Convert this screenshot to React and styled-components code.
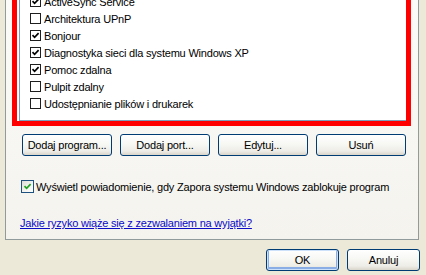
import React from "react";
import styled, { createGlobalStyle } from "styled-components";

const Global = createGlobalStyle`
  html, body { margin: 0; padding: 0; }
  body {
    background: #ECE9D8;
    font-family: "Liberation Sans", Arial, sans-serif;
    font-size: 11px;
    color: #000;
    overflow: hidden;
  }
`;

const Window = styled.div`
  width: 426px;
  height: 275px;
  display: flex;
  flex-direction: column;
  overflow: hidden;
`;

const TabPanel = styled.div`
  margin-left: 5px;
  width: 412px;
  height: 239px;
  border-left: 1px solid #919B9C;
  border-right: 1px solid #919B9C;
  border-bottom: 1px solid #919B9C;
  background: linear-gradient(180deg, #FBFBF9 0%, #F4F3EE 100%);
  display: flex;
  flex-direction: column;
`;

const RedFrame = styled.div`
  margin-left: 6px;
  width: 389px;
  border: 5px solid #FF0000;
  border-top: none;
  background: #fff;
`;

const ListBox = styled.div`
  margin-left: 2px;
  height: 120px;
  border-left: 1px solid #7F9DB9;
  border-bottom: 1px solid #7F9DB9;
  background: #fff;
  overflow: hidden;
`;

const Rows = styled.ul`
  list-style: none;
  margin: -7px 0 0 0;
  padding: 0 0 0 10px;
`;

const Row = styled.li`
  height: 17px;
  display: flex;
  align-items: center;
  gap: 3px;
  white-space: nowrap;
  letter-spacing: -0.2px;
`;

const ListCheck = styled.span`
  width: 9px;
  height: 9px;
  border: 1px solid #1E1E1E;
  background: #fff;
  display: inline-flex;
  align-items: center;
  justify-content: center;
  flex: none;
`;

const ButtonRow = styled.div`
  display: flex;
  gap: 8px;
  margin: 8px 0 0 16px;
`;

const XPButton = styled.button`
  width: ${(p) => p.$w || 90}px;
  height: 22px;
  padding: 0;
  border: 1px solid #003C74;
  border-radius: 3px;
  background: linear-gradient(180deg, #FFFFFF 0%, #F7F7F4 45%, #EEEDE7 80%, #D9D5CB 100%);
  font-family: "Liberation Sans", Arial, sans-serif;
  font-size: 11px;
  letter-spacing: -0.2px;
  color: #000;
  box-shadow: ${(p) =>
    p.$default
      ? "inset 0 0 0 1px #CEE1FB, inset 0 -1px 0 2px #89ADE4"
      : "none"};
`;

const NotifyRow = styled.label`
  display: flex;
  align-items: center;
  gap: 2px;
  margin: 24px 0 0 15px;
  height: 13px;
  white-space: nowrap;
  letter-spacing: -0.2px;
`;

const XPCheck = styled.span`
  width: 11px;
  height: 11px;
  border: 1px solid #1C5180;
  background: linear-gradient(135deg, #DCDCD7 0%, #F2F2EF 55%, #FFFFFF 100%);
  display: inline-flex;
  align-items: center;
  justify-content: center;
  flex: none;
`;

const HelpLink = styled.a`
  margin: 24px 0 0 14px;
  color: #0A0AC8;
  text-decoration: underline;
  white-space: nowrap;
  letter-spacing: -0.2px;
  line-height: 13px;
`;

const Footer = styled.div`
  display: flex;
  justify-content: flex-end;
  gap: 8px;
  margin: 9px 6px 0 0;
`;

const CheckMark = ({ color = "#000", size = 9 }) => (
  <svg width={size} height={size} viewBox="0 0 9 9">
    <path d="M1.5 4.2 L3.6 6.3 L7.6 2.2" fill="none" stroke={color} strokeWidth="1.7" />
  </svg>
);

const items = [
  ["ActiveSync Service", true],
  ["Architektura UPnP", false],
  ["Bonjour", true],
  ["Diagnostyka sieci dla systemu Windows XP", true],
  ["Pomoc zdalna", true],
  ["Pulpit zdalny", false],
  ["Udostępnianie plików i drukarek", false],
];

export default function App() {
  return (
    <>
      <Global />
      <Window>
        <TabPanel>
          <RedFrame>
            <ListBox>
              <Rows>
                {items.map(([label, on]) => (
                  <Row key={label}>
                    <ListCheck>{on && <CheckMark />}</ListCheck>
                    <span>{label}</span>
                  </Row>
                ))}
              </Rows>
            </ListBox>
          </RedFrame>
          <ButtonRow>
            <XPButton>Dodaj program...</XPButton>
            <XPButton>Dodaj port...</XPButton>
            <XPButton>Edytuj...</XPButton>
            <XPButton>Usuń</XPButton>
          </ButtonRow>
          <NotifyRow>
            <XPCheck>
              <CheckMark color="#21A121" />
            </XPCheck>
            <span>Wyświetl powiadomienie, gdy Zapora systemu Windows zablokuje program</span>
          </NotifyRow>
          <HelpLink href="#">Jakie ryzyko wiąże się z zezwalaniem na wyjątki?</HelpLink>
        </TabPanel>
        <Footer>
          <XPButton $w={73} $default>OK</XPButton>
          <XPButton $w={73}>Anuluj</XPButton>
        </Footer>
      </Window>
    </>
  );
}
